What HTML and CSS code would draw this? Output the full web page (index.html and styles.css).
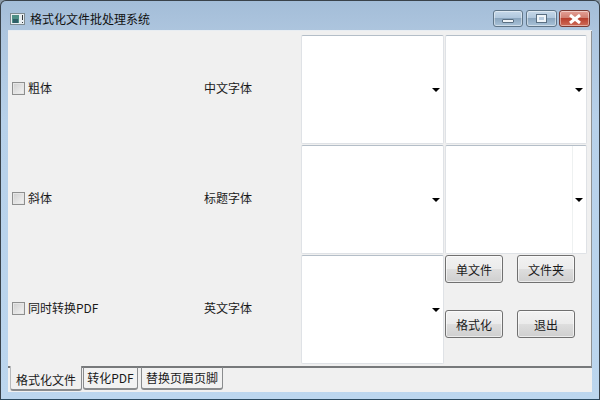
FILE: index.html
```html
<!DOCTYPE html>
<html lang="zh">
<head>
<meta charset="utf-8">
<title>格式化文件批处理系统</title>
<link rel="stylesheet" href="styles.css">
</head>
<body>
<div class="window">
  <header class="titlebar">
    <svg class="app-icon" width="15" height="12" viewBox="0 0 15 12">
      <rect x="0.5" y="0.5" width="14" height="11" fill="#e8eef2" stroke="#7d8a90"/>
      <rect x="2" y="2" width="7" height="8" fill="#4f8f86"/>
      <rect x="3" y="6" width="5" height="4" fill="#2f5f68"/>
      <rect x="12" y="2" width="1" height="5" fill="#33393d"/>
      <rect x="12" y="9" width="1" height="1" fill="#33393d"/>
    </svg>
    <span class="title">格式化文件批处理系统</span>
    <div class="controls">
      <div class="ctl"><span class="glyph-min"></span></div>
      <div class="ctl ctl-wide"><span class="glyph-max"></span></div>
      <div class="ctl ctl-wide ctl-close">
        <svg width="14" height="10" viewBox="0 0 14 10"><path d="M2 1 L12 9 M12 1 L2 9" stroke="#fff" stroke-width="3"/></svg>
      </div>
    </div>
  </header>
  <main class="client">
    <section class="pane">
      <label class="check"><span class="box"></span>粗体</label>
      <span class="label">中文字体</span>
      <div class="combo"><span class="arrow"></span></div>
      <div class="combo"><span class="arrow"></span></div>

      <label class="check"><span class="box"></span>斜体</label>
      <span class="label">标题字体</span>
      <div class="combo"><span class="arrow"></span></div>
      <div class="combo combo-split"><span class="arrow"></span></div>

      <label class="check"><span class="box"></span>同时转换PDF</label>
      <span class="label">英文字体</span>
      <div class="combo"><span class="arrow"></span></div>
      <div class="buttons">
        <button class="btn">单文件</button>
        <button class="btn">文件夹</button>
        <button class="btn">格式化</button>
        <button class="btn">退出</button>
      </div>
    </section>
    <nav class="tabs">
      <span class="tab tab-active">格式化文件</span>
      <span class="tab tab-pdf">转化PDF</span>
      <span class="tab tab-header">替换页眉页脚</span>
    </nav>
  </main>
</div>
</body>
</html>
```
FILE: styles.css
```css
* { box-sizing: border-box; }
html, body { margin: 0; height: 100%; }
body {
  width: 600px;
  height: 400px;
  overflow: hidden;
  background: #8a9aa8;
  font-family: "Noto Sans CJK SC", "Liberation Sans", sans-serif;
  font-size: 12px;
  color: #1a1a1a;
}
.window {
  width: 600px;
  height: 400px;
  display: flex;
  flex-direction: column;
  padding: 0 7px 7px;
  border: 1px solid #39424a;
  border-radius: 6px 6px 0 0;
  border-bottom-color: #2c4a60;
  background: linear-gradient(180deg, #a3bdd8 0, #adc5de 30px, #b7d1ea 120px, #bcd6ee 100%);
}
.titlebar {
  height: 29px;
  flex: none;
  display: flex;
  align-items: center;
  padding: 6px 2px 0;
}
.app-icon { flex: none; }
.title { margin-left: 5px; font-size: 12px; color: #111; }
.controls {
  margin-left: auto;
  display: flex;
  gap: 3px;
  align-self: flex-start;
  margin-top: 3px;
}
.ctl {
  width: 30px;
  height: 17px;
  border: 1px solid #5f7588;
  border-radius: 3px;
  background: linear-gradient(180deg, #c6d8e9 0, #b0c7dd 45%, #8ba6bf 50%, #a9c2d8 100%);
  box-shadow: inset 0 0 0 1px rgba(255,255,255,.45);
  display: flex;
  align-items: center;
  justify-content: center;
}
.ctl-wide { width: 31px; }
.ctl-close {
  margin-left: -1px;
  border-color: #7a3a33;
  background: linear-gradient(180deg, #e4a097 0, #d17f72 45%, #b8402f 50%, #cf6b58 100%);
}
.glyph-min {
  width: 12px;
  height: 4px;
  margin-top: 5px;
  background: #eef3f7;
  border: 1px solid #5a6f82;
  border-radius: 1px;
}
.glyph-max {
  width: 9px;
  height: 7px;
  background: #b9cde0;
  border: 2px solid #f0f5f9;
  outline: 1px solid #5a6f82;
}
.client {
  flex: 1;
  display: flex;
  flex-direction: column;
  background: #f0f0f0;
  border-top: 1px solid #e8edf2;
  min-height: 0;
}
.pane {
  height: 337px;
  flex: none;
  display: grid;
  grid-template-columns: 196px 97px 144px 143px;
  grid-template-rows: repeat(3, 109px);
  row-gap: 1px;
  padding: 4px 0 0 0;
  border-bottom: 2px solid #77797b;
  border-right: 1px solid #8f9294;
  align-items: center;
}
.check {
  display: flex;
  align-items: center;
  gap: 3px;
  padding: 0 0 5px 4px;
}
.label { padding-bottom: 5px; }
.box {
  width: 13px;
  height: 13px;
  margin-top: 2px;
  border: 1px solid #8e8f8f;
  background: linear-gradient(135deg, #cfcfcf 0, #f4f4f4 100%);
  box-shadow: inset 0 0 0 1px #e6e6e6;
}
.combo {
  height: 100%;
  margin-right: 1px;
  background: #fff;
  border: 1px solid #dfe2e6;
  border-top-color: #b4bec8;
  border-radius: 2px;
  display: flex;
  align-items: center;
  justify-content: flex-end;
  padding-right: 3px;
}
.combo-split {
  background: linear-gradient(90deg, #fff 0, #fff 126px, #eef1f1 126px, #eef1f1 127px, #fff 127px);
}
.arrow {
  width: 0;
  height: 0;
  border-left: 4px solid transparent;
  border-right: 4px solid transparent;
  border-top: 4px solid #000;
  margin-top: 1px;
}
.buttons {
  height: 100%;
  display: grid;
  grid-template-columns: 58px 58px;
  grid-template-rows: 28px 28px;
  column-gap: 14px;
  row-gap: 27px;
  align-content: start;
}
.btn {
  padding: 0;
  font: inherit;
  color: #1a1a1a;
  border: 1px solid #707070;
  border-radius: 3px;
  background: linear-gradient(180deg, #f2f2f2 0, #ebebeb 50%, #dddddd 52%, #cfcfcf 100%);
  box-shadow: inset 0 0 0 1px rgba(255,255,255,.6);
}
.tabs {
  display: flex;
  align-items: flex-start;
  padding-left: 2px;
  margin-top: -2px;
}
.tab {
  height: 23px;
  margin-top: 1px;
  padding-bottom: 2px;
  display: flex;
  align-items: center;
  justify-content: center;
  background: #f2f2f2;
  border: 1px solid #8a8c8e;
  border-top-color: #77797b;
  border-bottom-width: 2px;
  border-radius: 0 0 3px 3px;
}
.tab-pdf { width: 55px; margin-left: 1px; }
.tab-header { width: 82px; margin-left: 3px; }
.tab-active {
  height: 25px;
  width: 72px;
  margin-top: 0;
  padding: 4px 0 0;
  background: #f0f0f0;
  border-top: 0;
  border-left-color: #b8babc;
  position: relative;
}
```
